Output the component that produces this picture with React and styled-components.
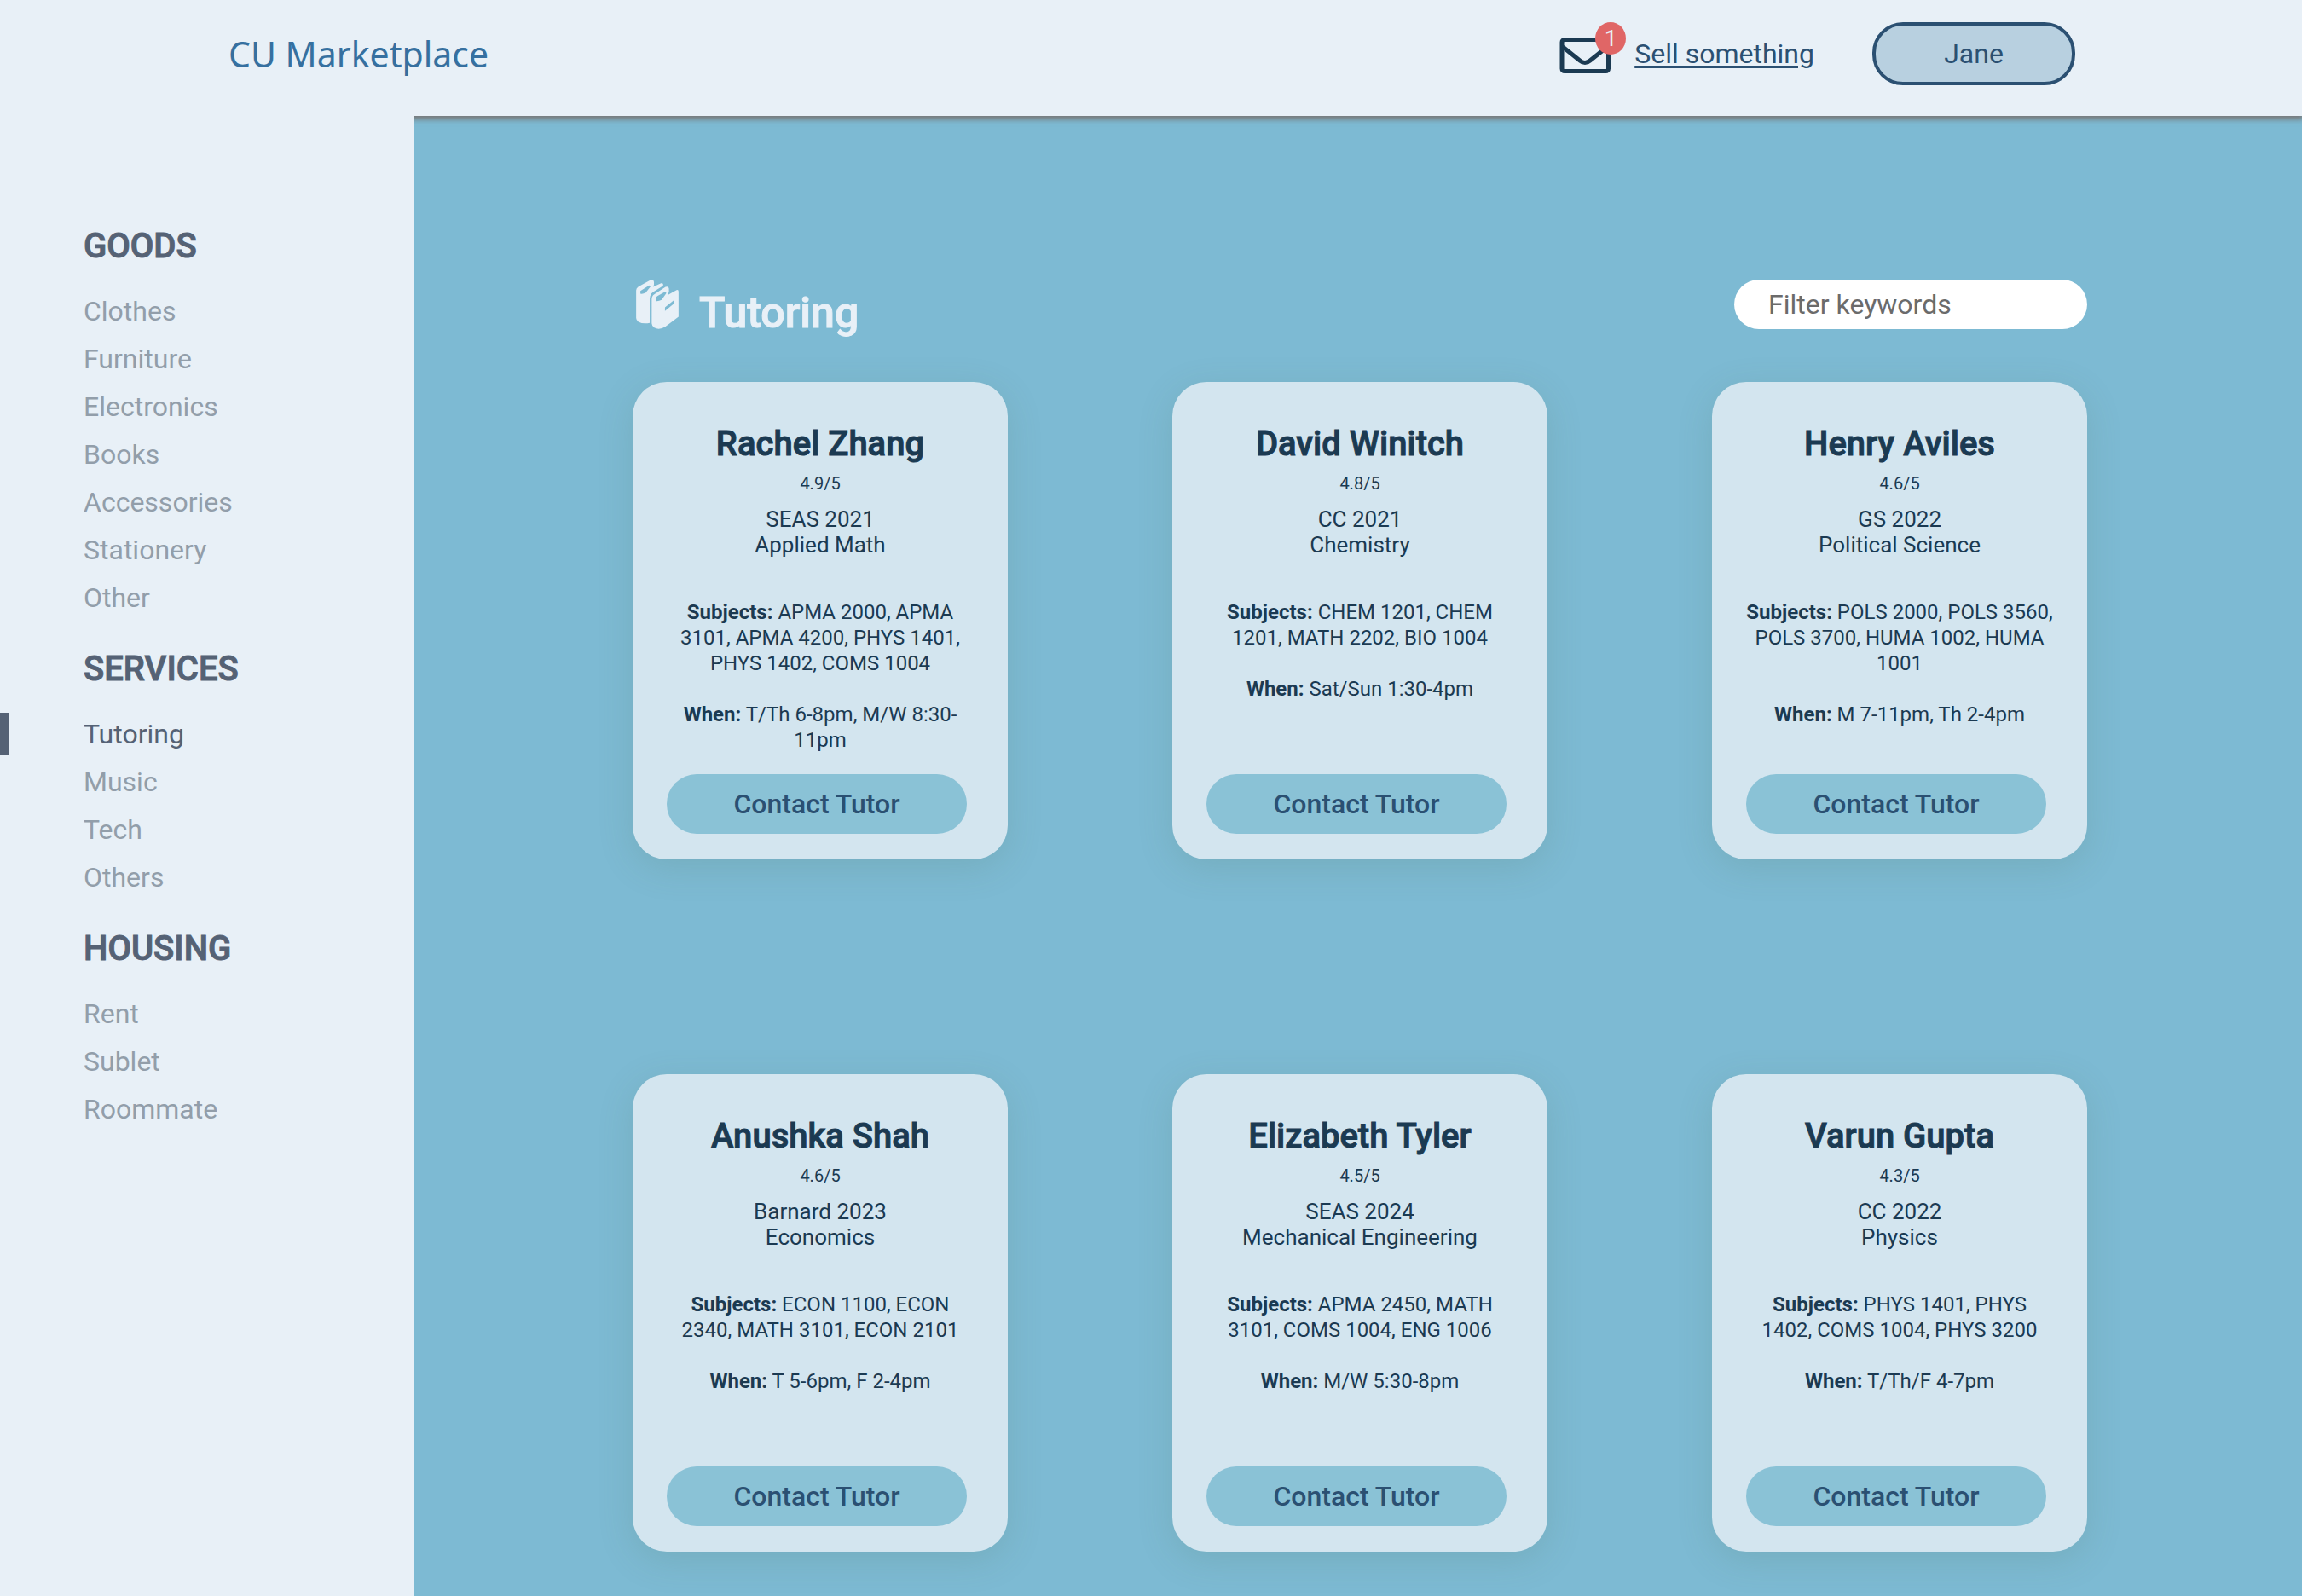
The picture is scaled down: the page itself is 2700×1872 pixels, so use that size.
import React from "react";
import styled, { createGlobalStyle } from "styled-components";

const Global = createGlobalStyle`
  *, *::before, *::after { box-sizing: border-box; }
  body { margin: 0; background: #7dbad3; font-family: Roboto, sans-serif; color: #1b3a52; }
  h1, h2, h3, p, ul { margin: 0; padding: 0; }
  button, input { font-family: inherit; }
`;

const Page = styled.div`
  min-height: 100vh;
  display: flex;
  flex-direction: column;
`;

const Header = styled.header`
  height: 136px;
  padding: 26px 266px 0 268px;
  background: #e8f0f7;
  box-shadow: 0 2px 6px 2px #777;
  display: flex;
  justify-content: space-between;
  align-items: flex-start;
`;

const Brand = styled.a`
  font-family: "Lucida Grande", "Noto Sans", "Open Sans", sans-serif;
  font-size: 41px;
  line-height: 74px;
  color: #3670a0;
  text-decoration: none;
`;

const Actions = styled.div`
  display: flex;
  align-items: flex-start;
`;

const MailButton = styled.button`
  position: relative;
  width: 60px;
  height: 60px;
  padding: 18px 0 0;
  border: 0;
  background: none;
  margin-right: 28px;
  svg { display: block; }
`;

const Badge = styled.span`
  position: absolute;
  top: 0;
  left: 42px;
  width: 36px;
  height: 38px;
  border-radius: 50%;
  background: #e06666;
  color: #e8f0f7;
  font-size: 26px;
  line-height: 38px;
  text-align: center;
`;

const SellLink = styled.a`
  font-size: 32px;
  line-height: 74px;
  color: #2b5072;
  text-underline-offset: 3px;
  margin-right: 68px;
`;

const UserButton = styled.button`
  width: 238px;
  height: 74px;
  border: 4px solid #2b5072;
  border-radius: 36px;
  background: #b8d0e0;
  color: #2b5072;
  font-size: 32px;
`;

const Body = styled.div`
  flex: 1;
  display: flex;
  align-items: stretch;
`;

const Sidebar = styled.nav`
  position: relative;
  width: 18%;
  flex: none;
  padding-top: 128px;
  background: #e8f0f7;
`;

const Section = styled.section`
  margin-bottom: 34px;
`;

const SectionTitle = styled.h2`
  padding-left: 98px;
  font-size: 40px;
  line-height: 50px;
  font-weight: 500;
  -webkit-text-stroke: 1px currentColor;
  color: #556275;
  margin-bottom: 26px;
`;

const NavList = styled.ul`
  list-style: none;
`;

const NavItem = styled.li`
  height: 50px;
  margin-bottom: 6px;
  border-left: 10px solid ${(p) => (p.$active ? "#556275" : "transparent")};
  padding-left: 88px;
  a {
    font-size: 32px;
    line-height: 50px;
    text-decoration: none;
    color: ${(p) => (p.$active ? "#556275" : "#929eaa")};
  }
`;

const Main = styled.main`
  flex: 1;
  padding: 192px 252px 52px 256px;
`;

const TitleBar = styled.div`
  display: flex;
  justify-content: space-between;
  align-items: flex-start;
  height: 120px;
`;

const Title = styled.h1`
  display: flex;
  align-items: flex-start;
  padding-left: 4px;
  gap: 24px;
  font-size: 50px;
  line-height: 78px;
  font-weight: 500;
  -webkit-text-stroke: 1px currentColor;
  color: #e8f0f7;
`;

const Filter = styled.input`
  width: 414px;
  height: 58px;
  border: 0;
  border-radius: 29px;
  padding: 0 40px;
  background: #fff;
  font-size: 32px;
  color: #1b3a52;
  &::placeholder { color: #6b6b6b; opacity: 1; }
`;

const Cards = styled.div`
  display: grid;
  grid-template-columns: repeat(3, 440px);
  justify-content: space-between;
  row-gap: 252px;
`;

const Card = styled.article`
  height: 560px;
  padding: 40px 40px 30px;
  border-radius: 40px;
  background: #d3e5ef;
  box-shadow: 0 10px 40px rgba(80, 110, 90, 0.17);
  display: flex;
  flex-direction: column;
  text-align: center;
`;

const Name = styled.h3`
  font-size: 40px;
  line-height: 66px;
  font-weight: 500;
  -webkit-text-stroke: 1px currentColor;
`;

const Rating = styled.p`
  font-size: 20px;
  line-height: 26px;
  margin-bottom: 14px;
`;

const School = styled.p`
  font-size: 26px;
  line-height: 30px;
`;

const Details = styled.div`
  flex: 1;
  padding-top: 49px;
`;

const Detail = styled.p`
  font-size: 24px;
  line-height: 30px;
  & + & { margin-top: 30px; }
`;

const Contact = styled.button`
  flex: none;
  width: 352px;
  height: 70px;
  border: 0;
  border-radius: 35px;
  background: #8ac2d6;
  color: #2b5072;
  font-size: 32px;
  font-weight: 500;
`;

const nav = [
  ["GOODS", ["Clothes", "Furniture", "Electronics", "Books", "Accessories", "Stationery", "Other"]],
  ["SERVICES", ["Tutoring", "Music", "Tech", "Others"]],
  ["HOUSING", ["Rent", "Sublet", "Roommate"]],
];

const tutors = [
  ["Rachel Zhang", "4.9/5", "SEAS 2021", "Applied Math", "APMA 2000, APMA 3101, APMA 4200, PHYS 1401, PHYS 1402, COMS 1004", "T/Th 6-8pm, M/W 8:30-11pm"],
  ["David Winitch", "4.8/5", "CC 2021", "Chemistry", "CHEM 1201, CHEM 1201, MATH 2202, BIO 1004", "Sat/Sun 1:30-4pm"],
  ["Henry Aviles", "4.6/5", "GS 2022", "Political Science", "POLS 2000, POLS 3560, POLS 3700, HUMA 1002, HUMA 1001", "M 7-11pm, Th 2-4pm"],
  ["Anushka Shah", "4.6/5", "Barnard 2023", "Economics", "ECON 1100, ECON 2340, MATH 3101, ECON 2101", "T 5-6pm, F 2-4pm"],
  ["Elizabeth Tyler", "4.5/5", "SEAS 2024", "Mechanical Engineering", "APMA 2450, MATH 3101, COMS 1004, ENG 1006", "M/W 5:30-8pm"],
  ["Varun Gupta", "4.3/5", "CC 2022", "Physics", "PHYS 1401, PHYS 1402, COMS 1004, PHYS 3200", "T/Th/F 4-7pm"],
];

function MailIcon() {
  return (
    <svg width="60" height="42" viewBox="0 0 60 42" fill="none" stroke="#1b3a52" strokeWidth="5" aria-hidden="true">
      <rect x="3" y="2.5" width="54.5" height="37" rx="3" />
      <path d="M4 11 L24 27 Q30 32 36 27 L56 11" />
    </svg>
  );
}

function BooksIcon() {
  return (
    <svg width="50" height="58" viewBox="0 0 150 175" aria-hidden="true">
      <path
        fill="#e8f0f7"
        fillRule="evenodd"
        d="M0 38 Q0 30 8 25 L52 1 Q62 -2 63 8 V18 L60 26 L88 13 Q96 11 96 19 L94 23 L60 44 Q48 52 48 68 V153 Q25 158 8 149 Q0 144 0 136 Z M15 40 L46 20 Q52 22 50 26 L34 46 Q24 52 15 50 Z"
      />
      <path
        fill="#e8f0f7"
        fillRule="evenodd"
        d="M55 70 Q55 58 64 52 L104 26 Q115 22 116 32 V42 L112 54 L143 37 Q150 35 150 42 V131 L104 166 Q82 180 64 170 Q55 163 55 155 Z M69 66 Q70 62 75 58 L102 43 Q108 44 106 49 L90 72 Q78 78 69 76 Z M102 98 L135 72 V84 L102 111 Z"
      />
    </svg>
  );
}

export default function App() {
  return (
    <Page>
      <Global />
      <Header>
        <Brand href="#home">CU Marketplace</Brand>
        <Actions>
          <MailButton type="button" aria-label="Messages">
            <MailIcon />
            <Badge>1</Badge>
          </MailButton>
          <SellLink href="#sell">Sell something</SellLink>
          <UserButton type="button">Jane</UserButton>
        </Actions>
      </Header>
      <Body>
        <Sidebar>
          {nav.map(([title, items]) => (
            <Section key={title}>
              <SectionTitle>{title}</SectionTitle>
              <NavList>
                {items.map((item) => (
                  <NavItem key={item} $active={item === "Tutoring"}>
                    <a href={"#" + item.toLowerCase()}>{item}</a>
                  </NavItem>
                ))}
              </NavList>
            </Section>
          ))}
        </Sidebar>
        <Main>
          <TitleBar>
            <Title>
              <BooksIcon />
              Tutoring
            </Title>
            <Filter type="text" placeholder="Filter keywords" aria-label="Filter keywords" />
          </TitleBar>
          <Cards>
            {tutors.map(([name, rating, school, major, subjects, when]) => (
              <Card key={name}>
                <Name>{name}</Name>
                <Rating>{rating}</Rating>
                <School>{school}</School>
                <School>{major}</School>
                <Details>
                  <Detail><b>Subjects:</b> {subjects}</Detail>
                  <Detail><b>When:</b> {when}</Detail>
                </Details>
                <Contact type="button">Contact Tutor</Contact>
              </Card>
            ))}
          </Cards>
        </Main>
      </Body>
    </Page>
  );
}
